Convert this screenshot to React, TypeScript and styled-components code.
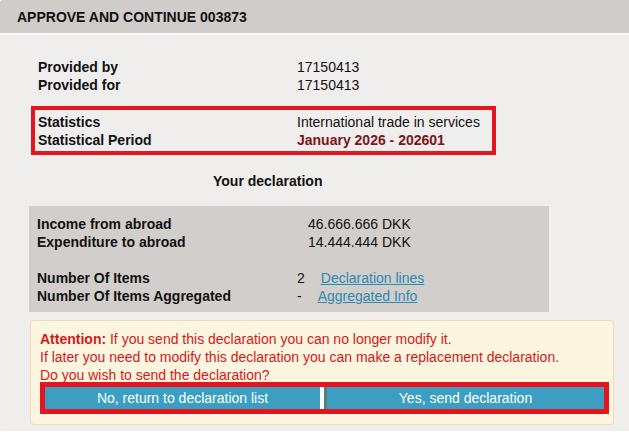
import React from "react";
import styled, { createGlobalStyle } from "styled-components";

const Global = createGlobalStyle`
  html, body { margin: 0; padding: 0; background: #ffffff; }
  body { font-family: "Liberation Sans", Arial, sans-serif; font-size: 14px; color: #111; }
  * { box-sizing: border-box; }
`;

const Card = styled.div`
  width: 629px;
  display: flex;
  flex-direction: column;
`;

const Header = styled.div`
  height: 35px;
  background: #d0ccc9;
  border-bottom: 2px solid #fafafa;
  border-radius: 3px 0 0 0;
  display: flex;
  align-items: center;
  padding-left: 17px;
  font-weight: bold;
  font-size: 14px;
  color: #111;
`;

const Panel = styled.div`
  background: #efeeec;
  padding: 23px 0 6px 0;
  border-radius: 0 0 0 3px;
`;

const InfoGroup = styled.div<{ $boxed?: boolean }>`
  display: grid;
  grid-template-columns: 259px auto;
  line-height: 18px;
  width: ${(p) => (p.$boxed ? "465px" : "auto")};
  margin-left: ${(p) => (p.$boxed ? "31px" : "38px")};
  padding: ${(p) => (p.$boxed ? "3px 0 2px 3px" : "0")};
  border: ${(p) => (p.$boxed ? "4px solid #e3151f" : "none")};
  margin-top: ${(p) => (p.$boxed ? "12px" : "0")};
`;

const Label = styled.div`
  font-weight: bold;
`;

const Value = styled.div<{ $emph?: boolean; $indent?: number }>`
  font-weight: ${(p) => (p.$emph ? "bold" : "normal")};
  color: ${(p) => (p.$emph ? "#7d1416" : "#111")};
  padding-left: ${(p) => p.$indent ?? 0}px;
`;

const Heading = styled.div`
  font-weight: bold;
  line-height: 18px;
  margin-top: 17px;
  padding-left: 213px;
`;

const Summary = styled.div`
  margin: 16px 0 0 29px;
  width: 520px;
  background: #d1cecb;
  padding: 9px 0 7px 8px;
  display: grid;
  grid-template-columns: 260px auto;
  line-height: 18px;
`;

const Spacer = styled.div`
  grid-column: 1 / -1;
  height: 18px;
`;

const Link = styled.a`
  color: #2b8ab2;
  text-decoration: underline;
  margin-left: 16px;
  cursor: pointer;
`;

const Attention = styled.div`
  margin: 8px 0 0 30px;
  width: 584px;
  background: #fdf5e0;
  border: 1px solid #e9dcbb;
  border-radius: 4px;
  padding: 9px 0 10px 9px;
  color: #d21a1a;
  line-height: 18px;
`;

const Strong = styled.span`
  font-weight: bold;
`;

const ButtonRow = styled.div`
  margin-top: -2px;
  width: 569px;
  border: 5px solid #e3151f;
  background: #ffffff;
  display: flex;
  gap: 4px;
`;

const Button = styled.button<{ $divider?: boolean }>`
  flex: ${(p) => (p.$divider ? "0 0 280px" : "0 0 275px")};
  height: 22px;
  border: none;
  border-left: ${(p) => (p.$divider ? "3px solid #5c7a80" : "none")};
  background: #3a9fc1;
  color: #ffffff;
  font-family: "Liberation Sans", Arial, sans-serif;
  font-size: 14px;
  padding: 0;
  cursor: pointer;
`;

export default function App() {
  return (
    <>
      <Global />
      <Card>
        <Header>APPROVE AND CONTINUE 003873</Header>
        <Panel>
          <InfoGroup>
            <Label>Provided by</Label>
            <Value>17150413</Value>
            <Label>Provided for</Label>
            <Value>17150413</Value>
          </InfoGroup>
          <InfoGroup $boxed>
            <Label>Statistics</Label>
            <Value>International trade in services</Value>
            <Label>Statistical Period</Label>
            <Value $emph>January 2026 - 202601</Value>
          </InfoGroup>
          <Heading>Your declaration</Heading>
          <Summary>
            <Label>Income from abroad</Label>
            <Value $indent={11}>46.666.666 DKK</Value>
            <Label>Expenditure to abroad</Label>
            <Value $indent={11}>14.444.444 DKK</Value>
            <Spacer />
            <Label>Number Of Items</Label>
            <Value>
              2<Link>Declaration lines</Link>
            </Value>
            <Label>Number Of Items Aggregated</Label>
            <Value>
              -<Link>Aggregated Info</Link>
            </Value>
          </Summary>
          <Attention>
            <div>
              <Strong>Attention:</Strong> If you send this declaration you can no longer modify it.
            </div>
            <div>If later you need to modify this declaration you can make a replacement declaration.</div>
            <div>Do you wish to send the declaration?</div>
            <ButtonRow>
              <Button>No, return to declaration list</Button>
              <Button $divider>Yes, send declaration</Button>
            </ButtonRow>
          </Attention>
        </Panel>
      </Card>
    </>
  );
}
